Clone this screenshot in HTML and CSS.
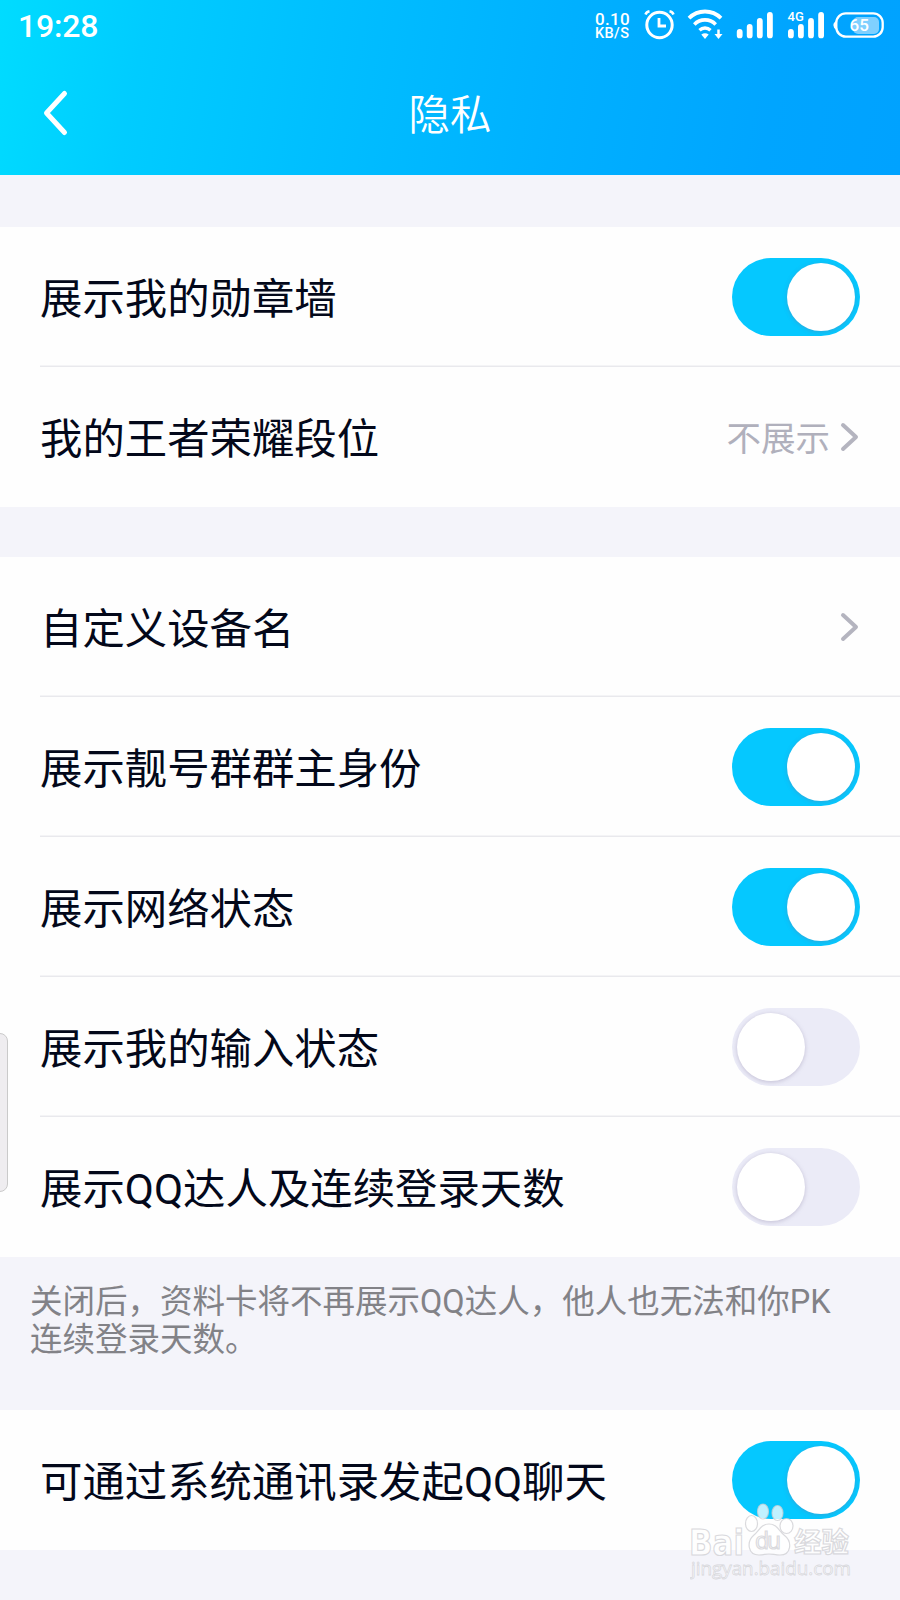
FILE: index.html
```html
<!DOCTYPE html>
<html lang="zh-CN">
<head>
    <meta charset="UTF-8">
    <meta name="viewport" content="width=device-width, initial-scale=1.0">
    <title>隐私</title>
    <link rel="stylesheet" href="styles.css">
</head>
<body>
    <header class="header">
        <div class="status-bar">
            <span class="time">19:28</span>
            <div class="speed">
                <span class="speed-num">0.10</span>
                <span class="speed-unit">KB/S</span>
            </div>
            <!-- alarm, wifi, signals, battery -->
            <svg class="status-icons" width="256" height="50" viewBox="0 0 256 50" fill="none" stroke="#fff">
                <circle cx="15.5" cy="25" r="12.7" stroke-width="3"/>
                <path d="M15 18v8h7" stroke-width="2.8"/>
                <path d="M1.5 14.5q1-2.6 4-3.2M29.500 14.500q-1-2.600-4-3.200" stroke-width="2.6"/>

                <path d="M45 18.200a22.500 22.500 0 0 1 32 0" stroke-width="3.8"/>
                <path d="M50.300 24.400a15 15 0 0 1 21.400 0" stroke-width="3.6"/>
                <path d="M55.500 30.200a8 8 0 0 1 11 0" stroke-width="3.400"/>
                <path d="M57.300 34.500q3.700-2.700 7.400 0l-3.700 4.500z" fill="#fff" stroke="none"/>
                <path d="M74.500 29.500v6" stroke-width="2.500"/>
                <path d="M70.500 34h8l-4 5z" fill="#fff" stroke="none"/>

                <path d="M95.700 32v3.400M105.700 27v8.400M115.800 21v14.400M125.900 15v20.400" stroke-width="5.800" stroke-linecap="round"/>
                <path d="M146.900 32v3.400M156.900 27v8.400M167 21v14.400M177.100 15v20.400" stroke-width="5.800" stroke-linecap="round"/>
                <text class="net" x="143.500" y="20.800">4G</text>

                <path d="M192.500 20.500q-6.500 4.700 0 9.400z" fill="#fff" stroke="none"/>
                <rect x="209" y="17" width="26" height="17" rx="5" fill="#7fd0ff" stroke="none"/>
                <rect x="192.300" y="13.300" width="46.400" height="23.400" rx="9.500" stroke-width="2.300"/>
                <text class="percent" x="205.500" y="31.300">65</text>
            </svg>
        </div>
        <div class="nav-bar">
            <svg class="back" width="30" height="50" viewBox="0 0 30 50" fill="none" stroke="#fff" stroke-width="5" stroke-linecap="round" stroke-linejoin="round">
                <path d="M23.500 5.500L5.500 25l18 19.500"/>
            </svg>
            <h1 class="title">隐私</h1>
        </div>
    </header>

    <main class="content">
        <div class="group">
            <div class="row">
                <span class="label">展示我的勋章墙</span>
                <span class="switch on"></span>
            </div>
            <div class="row">
                <span class="label">我的王者荣耀段位</span>
                <span class="value">不展示</span>
                <svg class="arrow" width="20" height="32" viewBox="0 0 20 32"><path d="M3 4l13 12L3 28"/></svg>
            </div>
        </div>

        <div class="group">
            <div class="row">
                <span class="label">自定义设备名</span>
                <svg class="arrow" width="20" height="32" viewBox="0 0 20 32"><path d="M3 4l13 12L3 28"/></svg>
            </div>
            <div class="row">
                <span class="label">展示靓号群群主身份</span>
                <span class="switch on"></span>
            </div>
            <div class="row">
                <span class="label">展示网络状态</span>
                <span class="switch on"></span>
            </div>
            <div class="row">
                <span class="label">展示我的输入状态</span>
                <span class="switch"></span>
            </div>
            <div class="row">
                <span class="label">展示QQ达人及连续登录天数</span>
                <span class="switch"></span>
            </div>
        </div>
        <p class="note">关闭后，资料卡将不再展示QQ达人，他人也无法和你PK<br>连续登录天数。</p>

        <div class="group">
            <div class="row">
                <span class="label">可通过系统通讯录发起QQ聊天</span>
                <span class="switch on"></span>
            </div>
        </div>
    </main>

    <!-- edge panel handle -->
    <div class="edge-handle"></div>

    <svg class="watermark" width="170" height="85" viewBox="0 0 170 85">
        <text class="wm-bai" x="-1" y="54.500" textLength="55" lengthAdjust="spacingAndGlyphs">Bai</text>
        <g class="paw">
            <ellipse cx="61.500" cy="23.500" rx="6" ry="8"/>
            <ellipse cx="73" cy="11.500" rx="5.500" ry="7.500"/>
            <ellipse cx="87.500" cy="13" rx="5.500" ry="7.500"/>
            <ellipse cx="96.500" cy="26" rx="6.500" ry="7.500"/>
            <path d="M79 24c-8 0-10 7-15 11-8 7-6 20 5 20 5 0 6-1 10-1s6 1 11 1c11 0 13-13 4-20-5-4-7-11-15-11z"/>
        </g>
        <text class="wm-du" x="65" y="49" textLength="26">du</text>
        <text class="wm-cn" x="104" y="52">经验</text>
        <text class="wm-url" x="1" y="75" textLength="160" lengthAdjust="spacingAndGlyphs">jingyan.baidu.com</text>
    </svg>
</body>
</html>
```

FILE: styles.css
```css
* {
    box-sizing: border-box;
}
body {
    position: relative;
    width: 900px;
    height: 1600px;
    margin: 0;
    overflow: hidden;
    background-color: #f4f4fa;
    font-family: Roboto, "Noto Sans CJK SC", sans-serif;
    color: #03081a;
}

/* header */
.header {
    height: 175px;
    background: linear-gradient(100deg, #00dcff 0%, #00ccff 16%, #00bfff 36%, #00b0ff 62%, #00a5ff 85%, #00a2ff 100%);
    color: #fff;
}
.status-bar {
    display: flex;
    align-items: center;
    height: 50px;
    padding-left: 18px;
}
.time {
    padding-top: 2px;
    font-size: 32px;
    font-weight: 500;
    letter-spacing: -0.2px;
    line-height: 50px;
}
.speed {
    display: flex;
    flex-direction: column;
    width: 49px;
    margin-left: auto;
    padding-top: 1px;
    font-weight: 500;
}
.speed-num {
    font-size: 17px;
    line-height: 14px;
    letter-spacing: 0.3px;
}
.speed-unit {
    font-size: 14.5px;
    line-height: 13px;
    letter-spacing: 0.4px;
    padding-top: 1px;
}
.status-icons {
    display: block;
}
.status-icons text {
    fill: #fff;
    stroke: none;
}
.net {
    font-size: 13px;
    font-weight: 500;
}
.percent {
    font-size: 17px;
    font-weight: 500;
}
.nav-bar {
    display: grid;
    grid-template-columns: 80px 1fr 80px;
    align-items: center;
    height: 125px;
}
.back {
    margin-left: 41px;
}
.title {
    margin: 0;
    padding-top: 6px;
    text-align: center;
    font-size: 41.5px;
    font-weight: 350;
    line-height: 60px;
}

/* setting rows */
.content {
    padding-top: 52px;
}
.group {
    background-color: #fefefe;
    margin-bottom: 50px;
}
.row {
    display: flex;
    align-items: center;
    height: 140px;
    margin-left: 40px;
    padding-right: 40px;
    box-shadow: inset 0 -1.5px #e9e9ed;
}
.row:last-child {
    box-shadow: none;
}
.label {
    flex: 1;
    padding-top: 6px;
    font-size: 42.4px;
    line-height: 60px;
    white-space: nowrap;
}
.value {
    margin-right: 10px;
    padding-top: 3px;
    font-size: 34.5px;
    line-height: 50px;
    color: #b0b0bc;
}
.arrow {
    fill: none;
    stroke: #b4b4bf;
    stroke-width: 4;
    stroke-linecap: round;
    stroke-linejoin: round;
}
.switch {
    width: 128px;
    height: 78px;
    padding: 5px;
    border-radius: 39px;
    background-color: #ebebf7;
    overflow: hidden;
}
.switch::after {
    content: "";
    display: block;
    width: 68px;
    height: 68px;
    border-radius: 50%;
    background-color: #fff;
    box-shadow: 0 1px 4px rgba(120, 110, 150, 0.35);
}
.switch.on {
    background-color: #05c8ff;
}
.switch.on::after {
    margin-left: auto;
}
.note {
    height: 153px;
    margin: -50px 0 0;
    padding: 26px 30px 0;
    font-size: 32.5px;
    line-height: 38px;
    white-space: nowrap;
    color: #828287;
}

.edge-handle {
    position: absolute;
    left: -10px;
    top: 1033px;
    width: 18px;
    height: 159px;
    border: 1.5px solid #cacaca;
    border-radius: 8px;
    background-color: #efedf0;
}

/* watermark */
.watermark {
    position: absolute;
    left: 690px;
    top: 1500px;
    fill: rgba(255, 255, 255, 0.75);
    stroke: rgba(205, 205, 210, 0.75);
    stroke-width: 1.2;
    font-family: "Open Sans", "Noto Sans CJK SC", sans-serif;
}
.wm-bai {
    font-family: "DejaVu Sans", sans-serif;
    font-size: 36px;
    font-weight: 700;
}
.wm-du {
    font-size: 23px;
}
.wm-cn {
    font-size: 27.5px;
    font-weight: 700;
}
.wm-url {
    font-size: 19px;
    stroke-width: 0.8;
}
```
